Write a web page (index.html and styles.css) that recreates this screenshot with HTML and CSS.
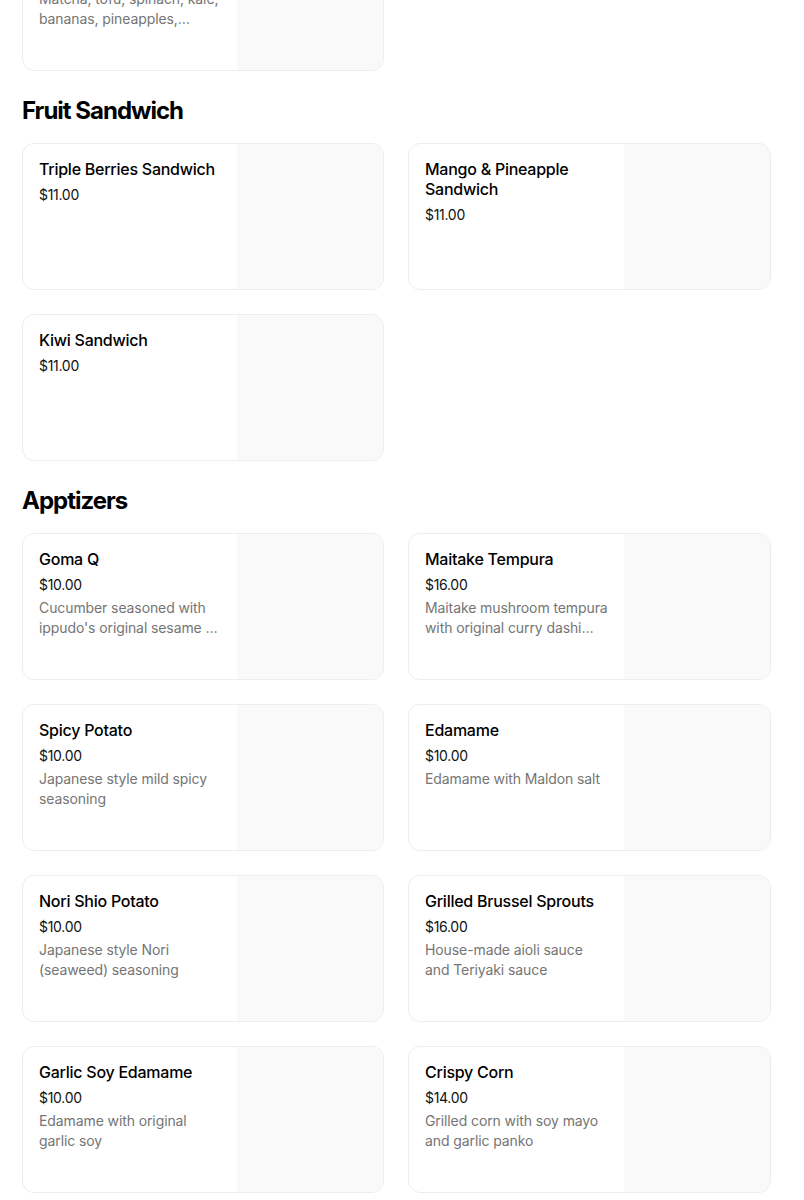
FILE: index.html
```html
<!DOCTYPE html>
<html lang="en">
<head>
<meta charset="utf-8">
<title>Menu</title>
<link rel="stylesheet" href="styles.css">
</head>
<body>
<main class="menu">
  <section class="section section-first">
    <div class="grid">
      <article class="card">
        <div class="info">
          <h3 class="name">Green Smoothie</h3>
          <div class="price">$9.00</div>
          <p class="desc">Matcha, tofu, spinach, kale, bananas, pineapples, almond milk</p>
        </div>
        <div class="thumb"></div>
      </article>
    </div>
  </section>

  <section class="section">
    <h2 class="heading">Fruit Sandwich</h2>
    <div class="grid">
      <article class="card">
        <div class="info">
          <h3 class="name">Triple Berries Sandwich</h3>
          <div class="price">$11.00</div>
        </div>
        <div class="thumb"></div>
      </article>
      <article class="card">
        <div class="info">
          <h3 class="name">Mango &amp; Pineapple Sandwich</h3>
          <div class="price">$11.00</div>
        </div>
        <div class="thumb"></div>
      </article>
      <article class="card">
        <div class="info">
          <h3 class="name">Kiwi Sandwich</h3>
          <div class="price">$11.00</div>
        </div>
        <div class="thumb"></div>
      </article>
    </div>
  </section>

  <section class="section">
    <h2 class="heading">Apptizers</h2>
    <div class="grid">
      <article class="card">
        <div class="info">
          <h3 class="name">Goma Q</h3>
          <div class="price">$10.00</div>
          <p class="desc">Cucumber seasoned with ippudo's original sesame oil sauce</p>
        </div>
        <div class="thumb"></div>
      </article>
      <article class="card">
        <div class="info">
          <h3 class="name">Maitake Tempura</h3>
          <div class="price">$16.00</div>
          <p class="desc">Maitake mushroom tempura with original curry dashi salt</p>
        </div>
        <div class="thumb"></div>
      </article>
      <article class="card">
        <div class="info">
          <h3 class="name">Spicy Potato</h3>
          <div class="price">$10.00</div>
          <p class="desc">Japanese style mild spicy seasoning</p>
        </div>
        <div class="thumb"></div>
      </article>
      <article class="card">
        <div class="info">
          <h3 class="name">Edamame</h3>
          <div class="price">$10.00</div>
          <p class="desc">Edamame with Maldon salt</p>
        </div>
        <div class="thumb"></div>
      </article>
      <article class="card">
        <div class="info">
          <h3 class="name">Nori Shio Potato</h3>
          <div class="price">$10.00</div>
          <p class="desc">Japanese style Nori (seaweed) seasoning</p>
        </div>
        <div class="thumb"></div>
      </article>
      <article class="card">
        <div class="info">
          <h3 class="name">Grilled Brussel Sprouts</h3>
          <div class="price">$16.00</div>
          <p class="desc">House-made aioli sauce and Teriyaki sauce</p>
        </div>
        <div class="thumb"></div>
      </article>
      <article class="card">
        <div class="info">
          <h3 class="name">Garlic Soy Edamame</h3>
          <div class="price">$10.00</div>
          <p class="desc">Edamame with original garlic soy</p>
        </div>
        <div class="thumb"></div>
      </article>
      <article class="card">
        <div class="info">
          <h3 class="name">Crispy Corn</h3>
          <div class="price">$14.00</div>
          <p class="desc">Grilled corn with soy mayo and garlic panko</p>
        </div>
        <div class="thumb"></div>
      </article>
    </div>
  </section>
</main>
</body>
</html>
```

FILE: styles.css
```css
* { box-sizing: border-box; }

html, body {
  margin: 0;
  padding: 0;
  background: #ffffff;
  font-family: "Inter", "Roboto", "Liberation Sans", sans-serif;
  color: #000000;
  overflow: hidden;
}

.menu {
  padding: 0 33px 0 22px;
  margin-top: -76px;
}

.heading {
  margin: 24px 0 0;
  height: 48px;
  font-size: 24px;
  line-height: 32px;
  font-weight: 700;
  letter-spacing: -1px;
  padding-top: 0;
}

.grid {
  display: grid;
  grid-template-columns: 362px 363px;
  gap: 24px;
}

.card {
  display: flex;
  height: 147px;
  border: 1px solid #ededed;
  border-radius: 12px;
  overflow: hidden;
  background: #ffffff;
}

.info {
  flex: 1;
  min-width: 0;
  padding: 15px 16px 16px 16px;
}

.thumb {
  width: 146px;
  flex: none;
  background: #f9f9f9;
}

.name {
  margin: 0;
  font-size: 16px;
  line-height: 20px;
  font-weight: 500;
  color: #000000;
  letter-spacing: -0.25px;
}

.price {
  margin-top: 6px;
  font-size: 14px;
  line-height: 20px;
  font-weight: 400;
  color: #111111;
  letter-spacing: -0.3px;
}

.desc {
  margin: 3px 0 0;
  font-size: 14px;
  line-height: 20px;
  color: #757575;
  letter-spacing: -0.1px;
  display: -webkit-box;
  -webkit-line-clamp: 2;
  -webkit-box-orient: vertical;
  overflow: hidden;
}
```
